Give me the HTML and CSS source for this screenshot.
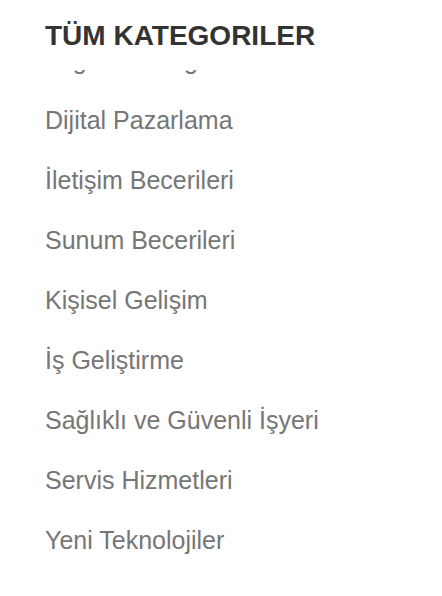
FILE: index.html
```html
<!DOCTYPE html>
<html lang="tr">
<head>
<meta charset="utf-8">
<title>Tüm Kategoriler</title>
<link rel="stylesheet" href="styles.css">
</head>
<body>
<div class="panel">
  <h2 class="panel-title">TÜM KATEGORILER</h2>
  <div class="list-viewport">
    <ul class="category-list">
      <li class="category-item">Bilgi Güvenliği</li>
      <li class="category-item">Dijital Pazarlama</li>
      <li class="category-item">İletişim Becerileri</li>
      <li class="category-item">Sunum Becerileri</li>
      <li class="category-item">Kişisel Gelişim</li>
      <li class="category-item">İş Geliştirme</li>
      <li class="category-item">Sağlıklı ve Güvenli İşyeri</li>
      <li class="category-item">Servis Hizmetleri</li>
      <li class="category-item">Yeni Teknolojiler</li>
    </ul>
  </div>
</div>
</body>
</html>
```
FILE: styles.css
```css
html, body {
  margin: 0;
  padding: 0;
  background: #ffffff;
}
body {
  font-family: "Liberation Sans", Arial, Helvetica, sans-serif;
}
.panel {
  padding: 20px 0 0 45px;
  display: flex;
  flex-direction: column;
}
.panel-title {
  margin: 0;
  font-size: 28px;
  line-height: 32px;
  font-weight: bold;
  color: #333333;
}
.list-viewport {
  margin-top: 18px;
  height: 526px;
  overflow: hidden;
}
.category-list {
  list-style: none;
  margin: -40px 0 0 0;
  padding: 0;
}
.category-item {
  font-size: 25px;
  line-height: 60px;
  color: #767676;
}
```
